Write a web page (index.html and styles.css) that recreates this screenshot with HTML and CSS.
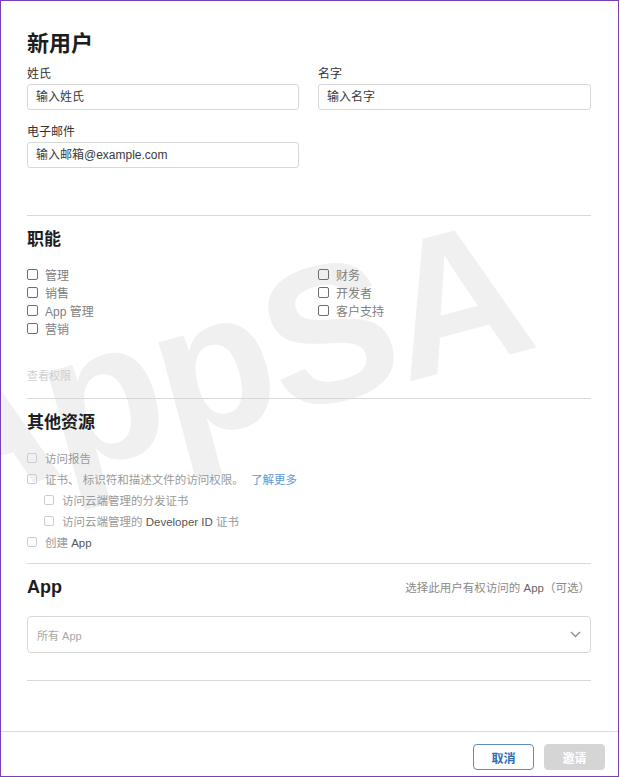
FILE: index.html
```html
<!DOCTYPE html>
<html lang="zh-CN">
<head>
<meta charset="utf-8">
<title>新用户</title>
<link rel="stylesheet" href="styles.css">
</head>
<body>
<div class="dialog">
  <div class="watermark" aria-hidden="true">AppSA</div>
  <main class="body">
    <h1 class="title">新用户</h1>
    <div class="fields">
      <div class="field">
        <label class="label">姓氏</label>
        <div class="input">输入姓氏</div>
      </div>
      <div class="field">
        <label class="label">名字</label>
        <div class="input">输入名字</div>
      </div>
      <div class="field field-gap">
        <label class="label">电子邮件</label>
        <div class="input">输入邮箱@example.com</div>
      </div>
    </div>
    <hr class="divider divider-1">

    <h2 class="heading h-roles">职能</h2>
    <div class="roles">
      <div class="col">
        <label class="check"><span class="box"></span><span>管理</span></label>
        <label class="check"><span class="box"></span><span>销售</span></label>
        <label class="check"><span class="box"></span><span>App 管理</span></label>
        <label class="check"><span class="box"></span><span>营销</span></label>
      </div>
      <div class="col">
        <label class="check"><span class="box"></span><span>财务</span></label>
        <label class="check"><span class="box"></span><span>开发者</span></label>
        <label class="check"><span class="box"></span><span>客户支持</span></label>
      </div>
    </div>
    <div class="perm">查看权限</div>
    <hr class="divider divider-2">

    <h2 class="heading h-other">其他资源</h2>
    <div class="other">
      <label class="check2"><span class="box2"></span><span>访问报告</span></label>
      <label class="check2"><span class="box2"></span><span>证书、 标识符和描述文件的访问权限。 <span class="link">了解更多</span></span></label>
      <label class="check2 indent"><span class="box2"></span><span>访问云端管理的分发证书</span></label>
      <label class="check2 indent"><span class="box2"></span><span>访问云端管理的 <span class="latin">Developer ID</span> 证书</span></label>
      <label class="check2"><span class="box2"></span><span>创建 <span class="latin">App</span></span></label>
    </div>
    <hr class="divider divider-3">

    <div class="app-head">
      <h2 class="heading app-title">App</h2>
      <span class="app-note">选择此用户有权访问的 <span class="latin">App</span>（可选）</span>
    </div>
    <div class="select">
      <span>所有 App</span>
      <svg class="chev" width="11" height="7" viewBox="0 0 11 7"><path d="M1 1 L5.5 5.5 L10 1" fill="none" stroke="#8e8e8e" stroke-width="1.3"/></svg>
    </div>
    <hr class="divider divider-4">
  </main>
  <footer class="footer">
    <button class="btn btn-cancel">取消</button>
    <button class="btn btn-invite">邀请</button>
  </footer>
</div>
</body>
</html>
```
FILE: styles.css
```css
* { box-sizing: border-box; }
html, body { margin: 0; padding: 0; background: #fff; }
body {
  font-family: "Liberation Sans", "Noto Sans CJK SC", sans-serif;
  color: #222;
}
.dialog {
  position: relative;
  width: 619px;
  height: 777px;
  border: 1px solid #7b3db5;
  display: flex;
  flex-direction: column;
  overflow: hidden;
  background: #fff;
}
.watermark {
  position: absolute;
  left: -100px;
  top: 265px;
  font-family: "Liberation Sans", sans-serif;
  font-weight: 700;
  font-size: 195px;
  line-height: 1;
  color: #f0f0f0;
  transform: rotate(-15deg);
  transform-origin: 50% 50%;
  z-index: 0;
  white-space: nowrap;
  letter-spacing: -4px;
}
.body {
  position: relative;
  z-index: 1;
  flex: 1;
  padding: 29px 27px 0 26px;
}
.title {
  margin: 0;
  font-size: 22px;
  line-height: 28px;
  font-weight: 700;
  color: #1d1d1f;
}
.fields {
  display: grid;
  grid-template-columns: 272px 273px;
  column-gap: 19px;
  margin-top: 8px;
}
.field-gap { margin-top: 14px; }
.label {
  display: block;
  font-size: 12px;
  line-height: 16px;
  color: #333;
}
.input {
  margin-top: 2px;
  height: 26px;
  border: 1px solid #d8d8d8;
  border-radius: 3px;
  padding: 0 8px;
  font-size: 12px;
  line-height: 24px;
  color: #3a3a3a;
  background: #fff;
}
.divider {
  border: 0;
  height: 1px;
  background: #d9d9d9;
  margin: 0;
}
.divider-1 { margin-top: 47px; }
.heading {
  margin: 0;
  font-size: 17px;
  line-height: 24px;
  font-weight: 700;
  color: #1d1d1f;
}
.h-roles { margin-top: 12px; }
.roles {
  display: grid;
  grid-template-columns: 291px 273px;
  margin-top: 13px;
}
.check {
  display: flex;
  align-items: center;
  height: 18px;
  font-size: 12px;
  color: #808080;
}
.box {
  width: 11px;
  height: 11px;
  border: 1px solid #6e6e6e;
  border-radius: 2px;
  margin-right: 7px;
  flex: none;
}
.perm {
  margin-top: 31px;
  font-size: 11px;
  line-height: 16px;
  color: #cfcfcf;
}
.divider-2 { margin-top: 14px; }
.h-other { margin-top: 12px; }
.other { margin-top: 12px; }
.check2 {
  display: flex;
  align-items: center;
  height: 21px;
  font-size: 11.5px;
  color: #9a9a9a;
  white-space: pre;
}
.check2.indent { padding-left: 17px; }
.box2 {
  width: 10px;
  height: 10px;
  border: 1px solid #cdcdcd;
  border-radius: 2px;
  margin-right: 8px;
  flex: none;
}
.latin { color: #555; }
.link {
  color: #5a9bd8;
  margin-left: 4px;
}
.divider-3 { margin-top: 11px; }
.app-head {
  display: flex;
  justify-content: space-between;
  align-items: center;
  margin-top: 11px;
  height: 24px;
}
.app-title { font-size: 18px; }
.app-note {
  font-size: 11.5px;
  color: #8a8a8a;
  padding-right: 1px;
}
.app-note .latin { color: #666; }
.select {
  margin-top: 17px;
  height: 37px;
  border: 1px solid #d8d8d8;
  border-radius: 4px;
  display: flex;
  align-items: center;
  justify-content: space-between;
  padding: 0 9px 0 9px;
  font-size: 11px;
  color: #a8a8a8;
  background: #fff;
}
.divider-4 { margin-top: 27px; }
.footer {
  position: relative;
  z-index: 1;
  height: 45px;
  border-top: 1px solid #dcdcdc;
  display: flex;
  justify-content: flex-end;
  align-items: flex-start;
  padding: 12px 13px 0 0;
  gap: 10px;
  background: #fff;
}
.btn {
  width: 61px;
  height: 26px;
  border-radius: 4px;
  font-family: "Liberation Sans", "Noto Sans CJK SC", sans-serif;
  font-size: 12px;
  font-weight: 700;
  padding: 0;
  cursor: pointer;
}
.btn-cancel {
  background: #fff;
  border: 1px solid #5b8cc4;
  color: #2f6db3;
}
.btn-invite {
  background: #d5d5d5;
  border: 1px solid #d5d5d5;
  color: #fff;
}
```
